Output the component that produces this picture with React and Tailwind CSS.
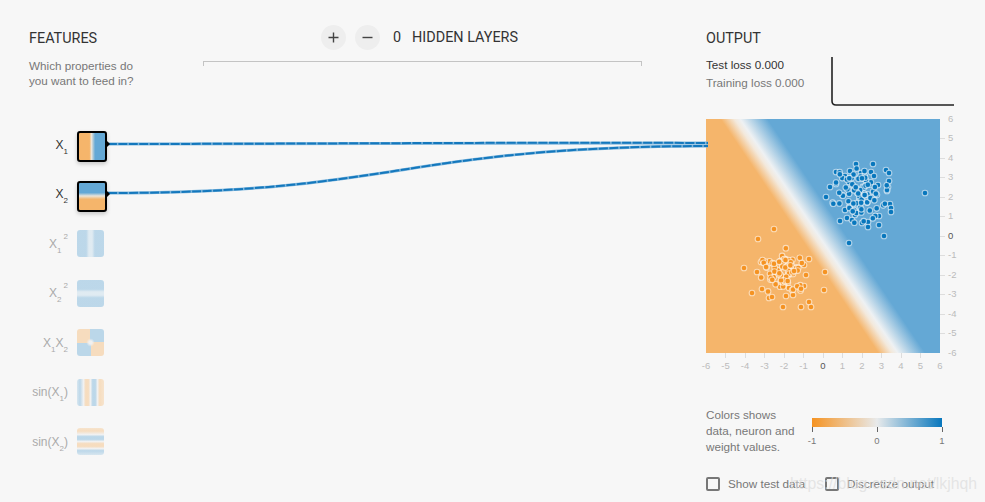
import React from 'react'

// small seeded generator so the clusters look the same on every render
const cluster = (seed, cx, cy, sx, sy, n) => {
  let s = seed
  const rnd = () => {
    s = (s * 16807) % 2147483647
    return s / 2147483647
  }
  const out = []
  for (let i = 0; i < n; i++) {
    const a = rnd() * Math.PI * 2
    const r = Math.sqrt(-2 * Math.log(rnd() * 0.93 + 0.07))
    out.push([cx + Math.cos(a) * r * sx, cy + Math.sin(a) * r * sy])
  }
  return out
}

// page coords, read off the screenshot; heatmap starts at 706,119
const bluePoints = [
  [925, 193], [849, 243], [884, 236], [826, 197], [830, 187], [836, 172], [836, 184], [856, 164], [873, 164],
  [850, 171], [861, 173], [886, 170], [889, 173], [889, 181], [888, 187], [887, 191], [887, 190], [878, 185],
  [890, 204], [891, 208], [891, 212], [840, 221], [847, 218], [852, 220], [862, 223], [868, 222], [868, 227],
  [879, 225], [879, 216], [845, 210], [855, 215], [871, 172], [874, 176], [845, 176], [849, 182],
  ...cluster(4711, 860, 195, 14, 13, 85),
]
const orangePoints = [
  [774, 229], [758, 239], [744, 268], [752, 293], [825, 272], [824, 290], [804, 286], [809, 302], [801, 307], [811, 307],
  [783, 307], [769, 298], [772, 297], [762, 289], [789, 288], [793, 295], [786, 296], [792, 290], [765, 262], [769, 263],
  [809, 259], [804, 265], [806, 275], [757, 272], [761, 262],
  ...cluster(9137, 784, 272, 11, 11, 80),
]

const xTicks = [-6, -5, -4, -3, -2, -1, 0, 1, 2, 3, 4, 5, 6]
const yTicks = [6, 5, 4, 3, 2, 1, 0, -1, -2, -3, -4, -5, -6]

const features = [
  { label: <>X<sub className="text-[8px] align-[-3px] leading-none">1</sub></>, active: true, bg: 'bg-[linear-gradient(to_right,#f5b56b_40%,#ebe5da_48%,#64a8d5_62%)]' },
  { label: <>X<sub className="text-[8px] align-[-3px] leading-none">2</sub></>, active: true, bg: 'bg-[linear-gradient(to_bottom,#64a8d5_36%,#ebe5da_48%,#f5b56b_60%)]' },
  { label: <>X<sub className="text-[8px] align-[-3px] leading-none">1</sub><sup className="text-[8px] align-[5px] leading-none ml-[2px]">2</sup></>, bg: 'bg-[linear-gradient(to_right,#64a8d5_34%,#bdd9ea_44%,#bdd9ea_56%,#64a8d5_66%)]' },
  { label: <>X<sub className="text-[8px] align-[-3px] leading-none">2</sub><sup className="text-[8px] align-[5px] leading-none ml-[2px]">2</sup></>, bg: 'bg-[linear-gradient(to_bottom,#64a8d5_34%,#bdd9ea_44%,#bdd9ea_56%,#64a8d5_66%)]' },
  { label: <>X<sub className="text-[8px] align-[-3px] leading-none">1</sub>X<sub className="text-[8px] align-[-3px] leading-none">2</sub></>, bg: 'bg-[radial-gradient(circle,#e8e8e8_8%,transparent_22%),conic-gradient(#64a8d5_25%,#f5b56b_25%_50%,#64a8d5_50%_75%,#f5b56b_75%)]' },
  { label: <>sin(X<sub className="text-[8px] align-[-3px] leading-none">1</sub>)</>, bg: 'bg-[linear-gradient(to_right,#a8cde4_0%,#64a8d5_11%,#e8e8e8_24%,#f5b56b_32%,#f5b56b_42%,#e8e8e8_50%,#64a8d5_58%,#64a8d5_68%,#e8e8e8_76%,#f5b56b_84%,#f5c78f_100%)]' },
  { label: <>sin(X<sub className="text-[8px] align-[-3px] leading-none">2</sub>)</>, bg: 'bg-[linear-gradient(to_bottom,#f5c78f_0%,#f5b56b_11%,#e8e8e8_24%,#64a8d5_32%,#64a8d5_42%,#e8e8e8_50%,#f5b56b_58%,#f5b56b_68%,#e8e8e8_76%,#64a8d5_84%,#a8cde4_100%)]' },
]

const Links = () => (
  <svg className="absolute inset-0 pointer-events-none" width="985" height="502" fill="none">
    <path d="M108 144 C 300 144, 500 142, 708 143" stroke="#7fb6dc" strokeWidth="3" />
    <path d="M108 144 C 300 144, 500 142, 708 143" stroke="#1478bd" strokeWidth="2" strokeDasharray="9 1.5" />
    <path d="M108 193 C 400 193, 400 147, 708 146" stroke="#7fb6dc" strokeWidth="3" />
    <path d="M108 193 C 400 193, 400 147, 708 146" stroke="#1478bd" strokeWidth="2" strokeDasharray="9 1.5" />
  </svg>
)

const Heatmap = () => (
  <div className="w-[234px] h-[234px] bg-[linear-gradient(56deg,#f5b56b_44%,#f3e9dc_47.5%,#eef1f3_49%,#64a8d5_56%)]">
    <svg width="234" height="234" viewBox="706 119 234 234">
      {orangePoints.map(([x, y], i) => (
        <circle key={i} cx={x} cy={y} r="2.8" fill="#f59322" stroke="#fff" strokeOpacity="0.6" strokeWidth="1.1" />
      ))}
      {bluePoints.map(([x, y], i) => (
        <circle key={i} cx={x} cy={y} r="2.8" fill="#0877bd" stroke="#fff" strokeOpacity="0.6" strokeWidth="1.1" />
      ))}
    </svg>
  </div>
)

const App = () => {
  return (
    <div className="relative w-[985px] h-[502px] overflow-hidden bg-[#f7f7f7] flex font-['Liberation_Sans',sans-serif] text-[#777]">
      <Links />

      {/* Features column */}
      <div className="w-[203px] pl-[29px] pt-[30px]">
        <h4 className="font-['Roboto',sans-serif] text-[14.4px] leading-[18px] text-[#333]">FEATURES</h4>
        <p className="mt-[10px] text-[11.7px] leading-[15px]">Which properties do<br />you want to feed in?</p>
        <div className="mt-[43px]">
          {features.map((f, i) => (
            <div key={i} className="h-[49.5px] flex items-start">
              <div className={`w-[39px] h-[27px] flex items-center justify-end text-[12px] whitespace-nowrap ${f.active ? 'text-[#333]' : 'text-[#aaa]'}`}>
                <span>{f.label}</span>
              </div>
              {f.active ? (
                <div className="relative ml-[9px]">
                  <div className={`w-[30px] h-[31px] border-2 border-black rounded-[3px] shadow-[0_2px_4px_rgba(0,0,0,0.2)] ${f.bg}`} />
                  <div className="absolute left-[29px] top-[9px] w-0 h-0 border-y-[4px] border-y-transparent border-l-[4px] border-l-black" />
                </div>
              ) : (
                <div className={`ml-[9px] w-[27px] h-[27px] rounded-[3px] opacity-40 ${f.bg}`} />
              )}
            </div>
          ))}
        </div>
      </div>

      {/* Hidden layers column */}
      <div className="w-[439px] pt-[25px]">
        <div className="flex items-center h-[25px] pl-[118px] font-['Roboto',sans-serif] text-[#333]">
          <button className="w-[25px] h-[25px] rounded-full bg-[#eee] flex items-center justify-center">
            <svg width="13" height="13" viewBox="0 0 13 13"><path d="M6.5 1.5v10M1.5 6.5h10" stroke="#444" strokeWidth="1.4" /></svg>
          </button>
          <button className="ml-[9px] w-[25px] h-[25px] rounded-full bg-[#eee] flex items-center justify-center">
            <svg width="13" height="13" viewBox="0 0 13 13"><path d="M1.5 6.5h10" stroke="#444" strokeWidth="1.4" /></svg>
          </button>
          <span className="ml-[13px] text-[14.4px]">0</span>
          <span className="ml-[11px] text-[14.4px]">HIDDEN LAYERS</span>
        </div>
        <div className="mt-[11px] h-[5px] border-t border-x border-[#c4c4c4]" />
      </div>

      {/* Output column */}
      <div className="ml-[64px] w-[279px] pt-[30px]">
        <h4 className="font-['Roboto',sans-serif] text-[14.4px] leading-[18px] text-[#333]">OUTPUT</h4>
        <div className="flex h-[71px]">
          <div className="w-[125px] pt-[8px] text-[11.7px] leading-[18px]">
            <div className="text-[#333]">Test loss 0.000</div>
            <div>Training loss 0.000</div>
          </div>
          <svg width="123" height="49" viewBox="0 0 123 49" fill="none" className="mt-[9px]">
            <path d="M1 0 V44 Q1 48 5 48 H123" stroke="#222" strokeWidth="1.6" />
          </svg>
        </div>

        <div className="flex">
          <div>
            <Heatmap />
            <div className="relative h-[4px] w-[234px] flex justify-between">
              {xTicks.map((t) => (
                <div key={t} className="w-0 flex flex-col items-center">
                  <div className={`w-px h-[5px] shrink-0 ${Math.abs(t) === 6 ? '' : 'bg-[#ddd]'}`} />
                  <span className={`mt-[2px] text-[9.5px] leading-[11px] ${t === 0 ? 'text-[#555]' : 'text-[#bbb]'}`}>{t}</span>
                </div>
              ))}
            </div>
          </div>
          <div className="h-[234px] flex flex-col justify-between">
            {yTicks.map((t) => (
              <div key={t} className="h-0 flex items-center">
                <div className={`w-[5px] h-px shrink-0 ${Math.abs(t) === 6 ? '' : 'bg-[#ddd]'}`} />
                <span className={`ml-[3px] text-[9.5px] ${t === 0 ? 'text-[#555]' : 'text-[#bbb]'}`}>{t}</span>
              </div>
            ))}
          </div>
        </div>

        {/* Color legend */}
        <div className="flex mt-[50px]">
          <p className="w-[106px] text-[11.7px] leading-[16px]">Colors shows<br />data, neuron and<br />weight values.</p>
          <div className="w-[130px] pt-[11px]">
            <div className="h-[9px] bg-[linear-gradient(to_right,#f59322,#e8eaeb_50%,#0877bd)]" />
            <div className="flex justify-between">
              {['-1', '0', '1'].map((t) => (
                <div key={t} className="w-0 flex flex-col items-center">
                  <div className="w-px h-[5px] shrink-0 bg-[#666]" />
                  <span className="mt-[3px] text-[9.5px] leading-[11px]">{t}</span>
                </div>
              ))}
            </div>
          </div>
        </div>

        {/* Checkboxes */}
        <div className="flex items-center mt-[20px] text-[11.7px]">
          <div className="w-[14px] h-[14px] border-2 border-[#777] rounded-[2px]" />
          <span className="ml-[8px] w-[97px] whitespace-nowrap">Show test data</span>
          <div className="w-[14px] h-[14px] border-2 border-[#777] rounded-[2px]" />
          <span className="ml-[8px] whitespace-nowrap">Discretize output</span>
        </div>
      </div>

      {/* csdn watermark sitting over the checkboxes */}
      <div className="absolute left-[790px] top-[475px] text-[15.8px] leading-[18px] text-[#dcdcdc]/70 whitespace-nowrap">https://blog.csdn.net/lkjhqh</div>
    </div>
  )
}

export default App
